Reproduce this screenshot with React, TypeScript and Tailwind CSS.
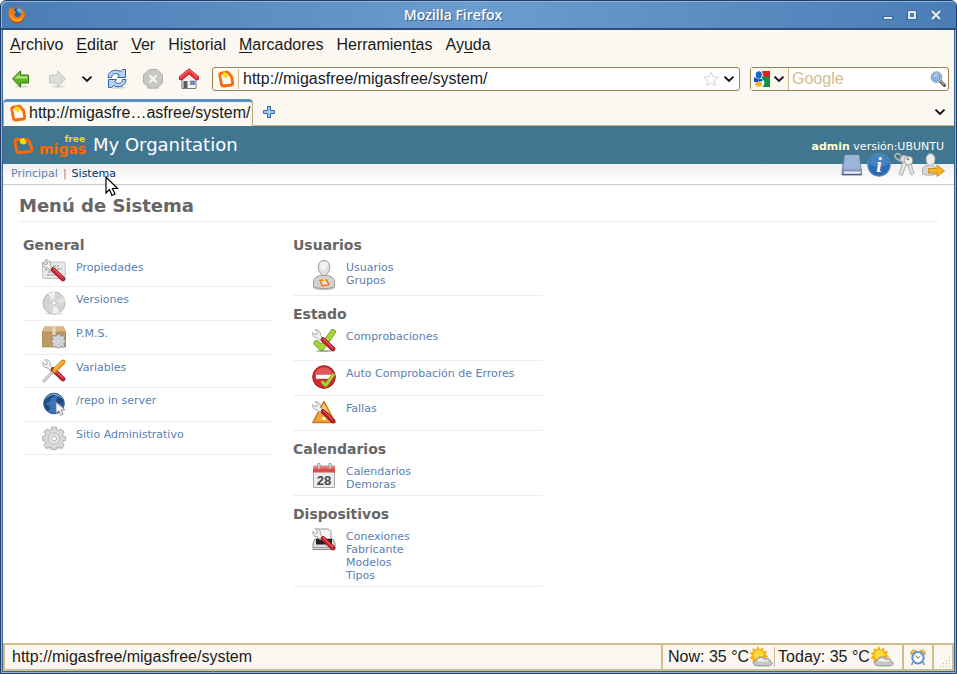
import React from "react";

type IconProps = { className?: string };

const Wrench = ({ handle = "#cf2330" }: { handle?: string }) => (
  <g>
    <path d="M3 .8 5.600 3.400 5 5.200 3.200 5.600.8 3.400C.2 6.400 2 8.800 5 8.600L8.500 12 11 9.500 8.200 6.200C9 3.200 7 .4 3 .8Z" fill="#f4f4f2" stroke="#92928e" strokeWidth=".8" />
    <path d="M11 10.500 21 20" stroke="#8f1720" strokeWidth="4.600" strokeLinecap="round" />
    <path d="M11 10.500 21 20" stroke={handle} strokeWidth="3.200" strokeLinecap="round" />
    <path d="M11.500 9.800 20.600 18.600" stroke="#f08a86" strokeWidth=".9" strokeLinecap="round" />
  </g>
);

const Gear = ({ fill = "#d9d9d9", stroke = "#a6a6a6" }: { fill?: string; stroke?: string }) => (
  <g stroke={stroke} strokeWidth=".9" fill={fill} strokeLinejoin="round">
    <path d="M9.800 1.200h4.400l.7 2.800 1.600.7 2.600-1.600 3 3-1.600 2.600.6 1.600 2.600.5v3.400l-2.600.8-.7 1.600 1.700 2.800-3 2.900-2.600-1.600-1.800.7-.6 2h-4.200l-.7-2-1.700-.7-2.600 1.600-3-3 1.600-2.700-.7-1.600-2.400-.7v-3.600l2.500-.6.6-1.600-1.600-2.600 3-3 2.600 1.600 1.700-.7Z" />
    <circle cx="12" cy="12.500" r="5.600" fill="#e9e9e9" stroke="#b4b4b4" />
    <circle cx="12" cy="12.500" r="2.600" fill="#fff" />
  </g>
);

const Logo = ({ className }: IconProps) => (
  <svg viewBox="0 0 18 18" className={className} aria-hidden="true">
    <path d="M2.800 5.200Q2.600 3.400 4.400 3.100L9.500 2.200Q11 2 11.600 3.200L14.500 6.500 15.700 13Q15.900 14.800 14 15L6.600 16Q4.800 16.200 4.500 14.500Z" fill="#fff" stroke="#ff6a00" strokeWidth="2.800" strokeLinejoin="round" />
    <path d="m6 3 1.400-1.400 1.200 1.800L10.800 3l-.5 2 2 1.300-2.400.7L9.400 9 7.800 7.200 6 7.700l.4-2.100Z" fill="#ffd71a" />
  </svg>
);

const FirefoxIcon = () => (
  <svg viewBox="0 0 18 18" className="size-[18px]" aria-hidden="true">
    <circle cx="9" cy="9" r="8" fill="#dc6410" />
    <circle cx="9.600" cy="7.200" r="5.400" fill="#245ea8" />
    <path d="M8.500 3c3-2 6 .4 5.600 4l-2.600.5L9.500 5Z" fill="#5ab7ea" />
    <path d="M1.400 1.400C3 3 4 3 6.600 2.600 5 4 5 5 7.700 5.800 9 6.400 7 7.400 6.400 8c-.3 3 4 4.400 6 1.600C14 7.600 13.800 4.700 12.400 2.400 16 4 17.400 8 16.200 11.400c-1.500 4.300-6.500 6.400-10.700 4.400C.9 13.600 0 9 .8 5.200Z" fill="#ee7a12" />
    <path d="M2.500 6C2.500 10 5 13.500 9 13.500c3 0 5.500-2 6.500-4.500-.3 4-3 6-6.500 6-4.500 0-7-4-6.500-9Z" fill="#fbb13a" />
    <path d="M1.400 12c1.400 3.800 6 5.600 10 4.600 3-1 4.500-3.200 5-6" fill="none" stroke="#a33b0a" strokeWidth=".8" />
  </svg>
);

const Arrow = ({ dir }: { dir: "back" | "next" }) => (
  <svg viewBox="0 0 20 20" className="size-5" aria-hidden="true">
    <ellipse cx="11" cy="17.500" rx="7" ry="1.400" fill="#000" opacity=".1" />
    {dir === "back" ? (
      <>
        <path d="M1.500 9.800 9.500 1.800V6h8v8h-8v4.200Z" fill="#5fb225" stroke="#2f7d0b" strokeLinejoin="round" />
        <path d="M3.200 9.800 8.500 4.400V7h8v2.800Z" fill="#a9dc6d" />
      </>
    ) : (
      <path d="M18.500 9.800 10.500 1.800V6h-8v8h8v4.200Z" fill="#dcdfd7" stroke="#c3c7bf" strokeLinejoin="round" />
    )}
  </svg>
);

const Chevron = () => (
  <svg viewBox="0 0 12 8" className="h-2 w-3" aria-hidden="true">
    <path d="M1.500 1.600 6 6l4.500-4.400" fill="none" stroke="#111" strokeWidth="1.900" />
  </svg>
);

const Reload = () => (
  <svg viewBox="0 0 22 22" className="size-[22px]" aria-hidden="true">
    <ellipse cx="11" cy="19.500" rx="8" ry="1.500" fill="#000" opacity=".12" />
    <g fill="#b7d3f0" stroke="#2e65ad" strokeLinejoin="round">
      <path d="M2 9.500C2.200 3 9 .5 14.500 3.500L16.500 1.500H19.500V9.500H11.500L13.400 7C10 4.500 6 5.500 5.500 9.500Z" />
      <path d="M20 11.500C19.800 18 13 20.500 7.500 17.500L5.500 19.500H2.500V11.500H10.500L8.600 14C12 16.500 16 15.500 16.500 11.500Z" />
    </g>
  </svg>
);

const Stop = () => (
  <svg viewBox="0 0 22 22" className="size-[22px]" aria-hidden="true">
    <ellipse cx="11" cy="20" rx="7" ry="1.300" fill="#000" opacity=".1" />
    <path d="M7 1.500h8L20.500 7v8L15 20H7L1.500 15V7Z" fill="#c9c7c3" stroke="#b0aeaa" />
    <path d="M7.500 7.500l7 7m0-7-7 7" stroke="#f7f5f1" strokeWidth="2.200" />
  </svg>
);

const Home = () => (
  <svg viewBox="0 0 22 22" className="size-[22px]" aria-hidden="true">
    <path d="M4 10 11 4l7 6v10.500H4Z" fill="#f3f3f0" stroke="#777" />
    <path d="M5.500 13h4v7h-4z" fill="#5c5c5c" />
    <path d="M12.500 13h4v3.500h-4z" fill="#6c94c4" stroke="#4a6488" strokeWidth=".6" />
    <path d="M1.500 11.500v-3L11 .8l9.500 7.700v3L18 12l-7-6-7 6Z" fill="#ee3339" stroke="#a50d13" strokeWidth=".8" />
    <path d="M2.500 8.900 11 2l8.500 6.900" fill="none" stroke="#ff8f8f" strokeWidth=".8" />
  </svg>
);

const Star = () => (
  <svg viewBox="0 0 16 16" className="size-4" aria-hidden="true">
    <path d="m8 1 2 4.700 5.200.5-4 3.400 1.300 5L8 12l-4.500 2.600 1.300-5-4-3.400L6 5.700Z" fill="#fff" stroke="#d4d4d4" />
  </svg>
);

const GoogleIcon = () => (
  <svg viewBox="0 0 16 16" className="size-4" aria-hidden="true">
    <path d="M0 0h16v16H0z" fill="#fff" />
    <path d="M8 0h8v6H9.500Z" fill="#ee1c1c" />
    <path d="M8 5.500 16 6v10H8.500C12 12 10 9 8 8Z" fill="#0c9246" />
    <path d="M0 6 4 8v3H0Z" fill="#1952bd" />
    <ellipse cx="4.800" cy="4" rx="3.100" ry="3.800" fill="#1763c7" />
    <path d="M3 8.200 8 8l.5 2L5 10.800Z" fill="#0d55b6" />
    <ellipse cx="4.600" cy="13.200" rx="3.600" ry="2.400" fill="#f5b31b" />
  </svg>
);

const Magnifier = () => (
  <svg viewBox="0 0 16 16" className="size-4" aria-hidden="true">
    <path d="m10 10 4.500 4.300" stroke="#555" strokeWidth="3.200" strokeLinecap="round" />
    <path d="m10.500 10 3.600 3.500" stroke="#aaa" strokeWidth="1.200" strokeLinecap="round" />
    <circle cx="6.500" cy="6.200" r="5.400" fill="#d9e6f3" stroke="#8390a0" />
    <circle cx="6.500" cy="6.200" r="3.800" fill="#8db9e8" stroke="#4e7fbb" strokeWidth=".8" />
    <path d="M4 5.500c.4-1.500 2-2.200 3.600-1.900" stroke="#fff" fill="none" />
  </svg>
);

const Plus = () => (
  <svg viewBox="0 0 12 12" className="size-3" aria-hidden="true">
    <path d="M4.500.5h3v4h4v3h-4v4h-3v-4h-4v-3h4Z" fill="#a5c7ec" stroke="#2f62a6" />
  </svg>
);

const Svg = ({ children, className = "size-6" }: { children: React.ReactNode; className?: string }) => (
  <svg viewBox="0 0 24 24" className={className} aria-hidden="true">{children}</svg>
);

const PropertiesIcon = () => (
  <Svg>
    <rect x=".6" y="3" width="22.600" height="16.500" rx="1.500" fill="#e8e8e6" stroke="#c2c2bf" />
    <path d="M11 7h6m-6 3h9M6 13h7M5 16h9M3 10.500h2" stroke="#8a8a8a" strokeWidth="1" strokeDasharray="3 1" />
    <Wrench />
  </Svg>
);
const DiscIcon = () => (
  <Svg>
    <ellipse cx="12" cy="22.500" rx="9" ry="1.200" fill="#999" opacity=".4" />
    <circle cx="12" cy="12" r="11" fill="#d4d4d2" stroke="#a9a9a7" strokeWidth=".8" />
    <path d="M12 12 6 2.500a11 11 0 0 1 7-1.500ZM12 12 18 21.500a11 11 0 0 1-8 1Z" fill="#f0f0ef" />
    <path d="m12 12 9-6.500a11 11 0 0 1 2 6Z" fill="#e4e4e4" />
    <circle cx="12" cy="12" r="4" fill="#dededc" />
    <circle cx="12" cy="12" r="2.300" fill="#fff" stroke="#a9a9a9" strokeWidth=".8" />
  </Svg>
);
const PackageIcon = () => (
  <Svg>
    <path d="M2.500 1.500h19L24 7v15H0V7Z" fill="#c59f6d" />
    <path d="M2.500 1.500h19L24 7H0Z" fill="#d8b98b" />
    <path d="M0 7h24v15H0Z" fill="#bf9866" stroke="#a37f4d" strokeWidth=".6" />
    <path d="M10.500 1.500h3V10h-3Z" fill="#ead9b6" />
    <g transform="translate(9 8.500) scale(.62)"><Gear fill="#d5d7da" stroke="#777" /></g>
  </Svg>
);
const ToolsIcon = () => (
  <Svg>
    <path d="m2 22 9-9.500" stroke="#8f8f8b" strokeWidth="2.600" strokeLinecap="round" />
    <path d="m2 22 9-9.500" stroke="#eee" strokeWidth="1.200" strokeLinecap="round" />
    <Wrench />
    <path d="m12.500 11.500 8.500-8.500" stroke="#bd6b0b" strokeWidth="4.600" strokeLinecap="round" />
    <path d="m12.500 11.500 8.500-8.500" stroke="#f6a428" strokeWidth="3.400" strokeLinecap="round" />
    <path d="m12.500 10 7.500-7.500" stroke="#fcd37c" strokeWidth="1" />
  </Svg>
);
const Pointer = () => <path d="M0 0v13.500l3.300-3 2.300 5.200 2.600-1.200-2.300-5 4.600-.3Z" fill="#f5f5f5" stroke="#777" strokeWidth=".9" />;
const GlobeIcon = () => (
  <Svg>
    <circle cx="12" cy="11.500" r="10.300" fill="#3d73b5" stroke="#2b5288" />
    <path d="M4 6.500C7 2 12 1.800 14 3L11 5.500 9 6l-1 3-3 1.500-1 2 3 1 1 3-1.500 2.500C1.500 17 1.500 10 4 6.500ZM15.500 5l4.500 1c1.500 3 1.800 6 1 8l-3-2.500-3-.5-1-3Z" fill="#1f4880" />
    <path d="M4 6.500C8 1 16 1.500 20 6" stroke="#8ab6e6" fill="none" />
    <g transform="translate(14 10) scale(.85)"><Pointer /></g>
  </Svg>
);
const GearIcon = () => <Svg><ellipse cx="12" cy="22" rx="10" ry="1.600" fill="#ccc" opacity=".6" /><Gear /></Svg>;
const UserIcon = () => (
  <svg viewBox="0 0 24 32" className="h-8 w-6" aria-hidden="true">
    <ellipse cx="12" cy="29" rx="10.500" ry="2" fill="#777" opacity=".45" />
    <path d="M1.500 28V23c0-4 4-6 7-6.500h7c3 .5 7 2.500 7 6.500v5c-6 2-15 2-21 0Z" fill="#d4d4d4" stroke="#999" />
    <path d="M12 1.500c4 0 6 3 5.600 7-.4 4-2.300 8-5.600 8s-5.200-4-5.600-8c-.4-4 1.600-7 5.600-7Z" fill="#e0e0e0" stroke="#9c9c9c" />
    <path d="M8 4.500c2-2 6-2 8 0-1 4-3 6-7 7Z" fill="#f3f3f3" />
    <path d="m8 21.500 6-1 3 5-6.500 1.500Z" fill="#e4e4e4" stroke="#f57a12" strokeWidth="1.700" strokeLinejoin="round" />
    <path d="M11 20h3v2h-3z" fill="#ffd020" />
  </svg>
);
const Check = () => (
  <g>
    <path d="m3 14 5 5L19.500 3" fill="none" stroke="#6b9914" strokeWidth="5.600" strokeLinejoin="round" strokeLinecap="round" />
    <path d="m3 14 5 5L19.500 3" fill="none" stroke="#a8d439" strokeWidth="4.200" strokeLinejoin="round" strokeLinecap="round" />
  </g>
);
const CheckIcon = () => (
  <Svg>
    <ellipse cx="12" cy="23" rx="8" ry="1" fill="#aaa" />
    <g transform="translate(1.500 1)"><Check /></g>
    <g transform="translate(0 1)"><Wrench /></g>
  </Svg>
);
const NoEntryIcon = () => (
  <Svg>
    <circle cx="12" cy="12" r="11.300" fill="#d22b2e" stroke="#9e171b" />
    <path d="M2.500 10a9.700 9.700 0 0 1 19 0Z" fill="#e0595a" />
    <rect x="4" y="9.800" width="16" height="4" fill="#fff" />
    <g transform="translate(8.500 8) scale(.65)"><Check /></g>
  </Svg>
);
const WarningIcon = () => (
  <Svg>
    <path d="M12 1.500 23.200 22.500H.8Z" fill="#f2a334" stroke="#c9781c" strokeWidth="1.400" strokeLinejoin="round" />
    <path d="m12 4 4.500 8H7Z" fill="#f9ca78" />
    <circle cx="12" cy="18.500" r="1.700" fill="#fff" />
    <g transform="translate(0 1)"><Wrench handle="#bd1c2a" /></g>
  </Svg>
);
const CalendarIcon = () => (
  <svg viewBox="0 0 24 26" className="h-[26px] w-6" aria-hidden="true">
    <path d="M1.500 3h21v21.500h-21z" fill="#ececec" stroke="#aaa" />
    <path d="M1 3h22v6.500H1z" fill="#e14b46" />
    <path d="M1 3h22v2.500H1z" fill="#ee7b74" />
    <path d="M7 1v4.500M18 1v4.500" stroke="#8e8e8e" strokeWidth="2.800" strokeLinecap="round" />
    <path d="M7 1v4M18 1v4" stroke="#eee" strokeWidth="1.200" strokeLinecap="round" />
    <text x="12" y="21.500" textAnchor="middle" fontSize="13" fontWeight="700" fontFamily="'Liberation Sans', sans-serif" fill="#444">28</text>
  </svg>
);
const PrinterIcon = () => (
  <Svg>
    <path d="M5.500 1h11l2.500 2.500V12h-13.500Z" fill="#f3f3f3" stroke="#999" />
    <path d="M3 11h18l2 4.500v6H1v-6Z" fill="#ddd" stroke="#888" />
    <path d="M4 11h16v5.500H4z" fill="#222" />
    <path d="M2 19.500h20" stroke="#999" />
    <Wrench />
  </Svg>
);

const WeatherIcon = () => (
  <svg viewBox="0 0 24 22" className="h-[22px] w-6 shrink-0" aria-hidden="true">
    <path d="m9 0 1.700 3.500L14 1.500l.4 3.800 3.800-.3-1.700 3.500 3 2-3.500 1.500L9 17l-3-.5-2.500.5.3-3.500L.5 12.200 3 9.500.5 7l3.400-1L3.500 2.300 7 3.500Z" fill="#f5ae14" />
    <circle cx="9.500" cy="9" r="5" fill="#ffd83a" />
    <path d="M7 19.500c-4-.5-3-5 .5-5 .5-4 7-5 8.500-1.500 3-1.500 5 0 5 2 4 1.500 2 5-1.500 5H9Z" fill="#c6c6c6" stroke="#858585" strokeWidth=".8" />
    <path d="M8 15.500c1-3.500 6-4 7-1 2-1 4-.5 4.500 1Z" fill="#efefef" />
  </svg>
);
const ClockIcon = () => (
  <svg viewBox="0 0 16 17" className="h-[17px] w-4" aria-hidden="true">
    <path d="m3 13-1.500 3M13 13l1.500 3" stroke="#888" strokeWidth="1.500" />
    <path d="M.8 5.500C0 1.500 4 0 6.500 2ZM15.200 5.500C16 1.500 12 0 9.500 2Z" fill="#f7c55b" stroke="#cc8b1e" strokeWidth=".8" />
    <circle cx="8" cy="8.800" r="5.700" fill="#fff" stroke="#5a93d6" strokeWidth="2" />
    <path d="m5.500 6.500 2.700 2.800L10.500 7" fill="none" stroke="#555" />
  </svg>
);

const BookIcon = () => (
  <Svg>
    <path d="M4.500 2h14.500l2.500 16v4h-19.500v-4Z" fill="#7f93bd" stroke="#6c7ba5" strokeWidth=".8" />
    <path d="M5 2h14l1.500 14.500H3.500Z" fill="#9ab5d8" />
    <path d="M4 18.500h16.500v2.300H4z" fill="#f1f2f6" />
    <path d="M2 21.500h19.500" stroke="#4f5b85" strokeWidth="1.200" />
  </Svg>
);
const InfoIcon = () => (
  <Svg>
    <circle cx="12" cy="12" r="11.300" fill="#2b6cb0" stroke="#6294c4" />
    <path d="M2 11a10 10 0 0 1 20 0c-5 3-14 4-20 0Z" fill="#4681bf" />
    <text x="12" y="19" textAnchor="middle" fontSize="20" fontStyle="italic" fontWeight="700" fontFamily="'Liberation Serif', serif" fill="#fff">i</text>
  </Svg>
);
const KeysIcon = () => (
  <Svg>
    <path d="M7 2C4 0 1 .5 1 3s4 4.500 7 5" fill="none" stroke="#bbb" strokeWidth="1.500" />
    <path d="m9 8-4 13 3 1.500L13 10ZM13 10l4 12 3-2-4-12Z" fill="#e3e3df" stroke="#aaa" strokeWidth=".9" />
    <circle cx="10" cy="6" r="3.800" fill="#d7d7d3" stroke="#a4a4a4" />
    <circle cx="14.500" cy="7.500" r="4.100" fill="#efefec" stroke="#a4a4a4" />
    <circle cx="14" cy="6" r="1.300" fill="#888" />
  </Svg>
);
const LogoutIcon = () => (
  <Svg>
    <path d="M1.500 21v-4c0-3 4-5 7-5s7 2 7 5v4c-4 1.500-10 1.500-14 0Z" fill="#d9d9d9" stroke="#aaa" />
    <path d="M9.500.8c6 0 5.500 11.500 0 11.500S3.500.8 9.500.8Z" fill="#ececec" stroke="#bbb" />
    <path d="M7.500 15.500H16v-3.500l7.500 6-7.500 5.500V20H7.500Z" fill="#f7b21d" stroke="#c3810c" strokeWidth=".8" />
  </Svg>
);

type Row = { icon: React.ReactNode; links: string[]; height: string };
type Section = { title: string; rows: Row[] };

const left: Section[] = [
  {
    title: "General",
    rows: [
      { icon: <PropertiesIcon />, links: ["Propiedades"], height: "h-8" },
      { icon: <DiscIcon />, links: ["Versiones"], height: "h-[34px]" },
      { icon: <PackageIcon />, links: ["P.M.S."], height: "h-[34px]" },
      { icon: <ToolsIcon />, links: ["Variables"], height: "h-[33px]" },
      { icon: <GlobeIcon />, links: ["/repo in server"], height: "h-[34px]" },
      { icon: <GearIcon />, links: ["Sitio Administrativo"], height: "h-[33px]" },
    ],
  },
];

const right: Section[] = [
  { title: "Usuarios", rows: [{ icon: <UserIcon />, links: ["Usuarios", "Grupos"], height: "h-[41px]" }] },
  {
    title: "Estado",
    rows: [
      { icon: <CheckIcon />, links: ["Comprobaciones"], height: "h-[37px]" },
      { icon: <NoEntryIcon />, links: ["Auto Comprobación de Errores"], height: "h-[35px]" },
      { icon: <WarningIcon />, links: ["Fallas"], height: "h-[35px]" },
    ],
  },
  { title: "Calendarios", rows: [{ icon: <CalendarIcon />, links: ["Calendarios", "Demoras"], height: "h-[37px]" }] },
  { title: "Dispositivos", rows: [{ icon: <PrinterIcon />, links: ["Conexiones", "Fabricante", "Modelos", "Tipos"], height: "h-[63px]" }] },
];

function Column({ sections }: { sections: Section[] }) {
  return (
    <div className="w-[250px]">
      {sections.map((section) => (
        <section key={section.title}>
          <h2 className="h-7 pt-2 text-[14px] leading-5 font-bold text-[#666]">{section.title}</h2>
          <ul>
            {section.rows.map((row) => (
              <li key={row.links[0]} className={`flex items-start gap-2.5 border-b border-[#eee] pl-[19px] ${row.height}`}>
                <span className="mt-1 w-6 shrink-0">{row.icon}</span>
                <span className="flex flex-col pt-1.5">
                  {row.links.map((link) => (
                    <a key={link} href="#" className="text-[11px] leading-[13px] text-[#5b80b2]">{link}</a>
                  ))}
                </span>
              </li>
            ))}
          </ul>
        </section>
      ))}
    </div>
  );
}

const menus: [string, string, string][] = [
  ["", "A", "rchivo"],
  ["", "E", "ditar"],
  ["", "V", "er"],
  ["Hi", "s", "torial"],
  ["", "M", "arcadores"],
  ["Herramien", "t", "as"],
  ["Ay", "u", "da"],
];

const cell = "flex items-center border-2 border-[#d2bc8c]";

export default function App() {
  return (
    <div className="flex min-h-screen flex-col rounded-t-md border border-[#1f3f68] bg-[#8fb4dc] px-px pb-px font-['Liberation_Sans',sans-serif] text-[16px] text-[#1a1a1a]">
      <header className="-mx-px flex h-[29px] items-center rounded-t-[5px] border-b-2 border-[#2f4f78] bg-linear-to-r from-[#4a7db5] via-[#6c9dd0] to-[#4a7db5] pr-1 pl-[7px] shadow-[inset_1px_1px_0_#8fb4dc]">
        <FirefoxIcon />
        <h1 className="flex-1 text-center font-['Open_Sans',sans-serif] text-[14px] font-semibold text-white [text-shadow:1px_1px_0_#3c618c]">Mozilla Firefox</h1>
        <div className="flex w-[72px] items-center gap-3">
          <button aria-label="Minimizar" className="flex size-4 items-end p-[3px]"><span className="h-1 w-full border border-[#3c6798] bg-[#dfeaf6]" /></button>
          <button aria-label="Maximizar" className="size-2 border-2 border-[#dfeaf6] outline outline-[#3c6798]" />
          <button aria-label="Cerrar" className="ml-0.5">
            <svg viewBox="0 0 12 12" className="size-3" aria-hidden="true"><path d="m2 2 8 8m0-8-8 8" stroke="#3c6798" strokeWidth="4" /><path d="m2 2 8 8m0-8-8 8" stroke="#e6eff8" strokeWidth="2.200" /></svg>
          </button>
        </div>
      </header>

      <div className="flex flex-1 flex-col border-x border-b border-[#3a6796] bg-[#fbf8f1]">
        <nav className="flex h-[30px] items-center gap-[13px] pl-[7px]">
          {menus.map(([before, key, after]) => (
            <button key={before + key + after} className="leading-5">{before}<span className="underline underline-offset-2">{key}</span>{after}</button>
          ))}
        </nav>

        <div className="flex h-[38px] items-center pr-[5px] pl-2">
          <button aria-label="Atrás"><Arrow dir="back" /></button>
          <button aria-label="Adelante" className="ml-4"><Arrow dir="next" /></button>
          <button aria-label="Historial reciente" className="ml-3.5"><Chevron /></button>
          <button aria-label="Recargar" className="ml-[13px]"><Reload /></button>
          <button aria-label="Detener" className="ml-3.5"><Stop /></button>
          <button aria-label="Inicio" className="ml-3.5"><Home /></button>
          <div className="ml-3 flex h-6 flex-1 items-center rounded-[3px] border border-[#9a834e] bg-white pr-1">
            <span className="flex h-5 w-[26px] items-center justify-center border-r border-[#d2bc8c] bg-[#fbf8f1]"><Logo className="size-[18px]" /></span>
            <input aria-label="Dirección" defaultValue="http://migasfree/migasfree/system/" className="min-w-0 flex-1 pl-1 outline-none" />
            <button aria-label="Añadir a marcadores"><Star /></button>
            <button aria-label="Mostrar historial" className="ml-1"><Chevron /></button>
          </div>
          <div className="ml-2.5 flex h-6 w-[199px] items-center rounded-[3px] border border-[#9a834e] bg-white pr-0.5">
            <button aria-label="Buscador" className="flex h-[22px] w-[38px] items-center gap-[3px] border-r border-[#d2bc8c] bg-[#fbf8f1] pl-[3px]"><GoogleIcon /><Chevron /></button>
            <input aria-label="Buscar" placeholder="Google" className="min-w-0 flex-1 pl-[3px] outline-none placeholder:text-[#d2bc8c]" />
            <button aria-label="Buscar ahora"><Magnifier /></button>
          </div>
        </div>

        <div className="flex h-7 items-center border-b border-[#cdb583] pr-2">
          <button className="-mb-px flex h-[27px] w-[250px] items-center gap-0.5 rounded-t-[4px] border border-t-[3px] border-[#b9a67a] border-b-transparent border-t-[#5d91c8] bg-[#fbf8f1] pl-[5px] whitespace-nowrap"><Logo className="size-[18px] shrink-0" />http://migasfre…asfree/system/</button>
          <button aria-label="Nueva pestaña" className="ml-2.5"><Plus /></button>
          <button aria-label="Lista de pestañas" className="ml-auto"><Chevron /></button>
        </div>

        <div className="flex-1 bg-white font-['DejaVu_Sans',sans-serif]">
          <div className="relative">
            <div className="flex h-[38px] items-center bg-[#417690] px-2">
              <svg viewBox="0 0 24 20" className="h-5 w-6" aria-hidden="true">
                <path d="M4 6.500Q4 4.500 6 4.500L16 4.500 18.500 7 21 14Q21.500 16 19 16.500L8 17.500Q6 17.500 5.500 15.500Z" fill="none" stroke="#ff6a00" strokeWidth="3" strokeLinejoin="round" />
                <path d="m9 4 4-1 .5 2 2 1-.5 3-3 .5L9 8Z" fill="#f5db0a" />
              </svg>
              <div className="ml-1 flex w-[50px] flex-col font-bold">
                <span className="mr-1 self-end text-[9px] leading-2 text-[#e8e010]">free</span>
                <span className="text-[14px] leading-3 text-[#ff6a00]">migas</span>
              </div>
              <span className="ml-1 text-[18px] leading-6 text-white">My Organitation</span>
              <p className="mr-0.5 ml-auto self-end pb-[11px] text-[11px] leading-[13px] text-white"><b className="text-[#ffffcc]">admin</b> versión:UBUNTU</p>
            </div>
            <nav className="flex h-[21px] items-center gap-[5px] border-b border-[#ccc] bg-linear-to-b from-[#f0f0f0] to-white pl-2 text-[11px] text-[#888]">
              <a href="#" className="text-[#5b80b2]">Principal</a>|
              <a href="#" className="text-[#003366]">Sistema</a>
            </nav>
            <div className="absolute top-[27px] right-[9px] flex gap-[3px]">
              <button aria-label="Documentación"><BookIcon /></button>
              <button aria-label="Información"><InfoIcon /></button>
              <button aria-label="Cambiar contraseña"><KeysIcon /></button>
              <button aria-label="Salir"><LogoutIcon /></button>
            </div>
            <svg viewBox="0 0 14 21" className="pointer-events-none absolute top-[50px] left-[102px] h-[21px] w-3.5" aria-hidden="true">
              <path d="M1 1v16l3.500-3.500 2.500 6 3-1.500-2.500-5.500h5Z" fill="#fff" stroke="#000" strokeWidth="1.200" />
            </svg>
          </div>
          <main className="pr-[15px] pl-4">
            <h1 className="h-[37px] border-b border-[#eee] pt-[9px] text-[18px] leading-6 font-bold text-[#666]">Menú de Sistema</h1>
            <div className="flex gap-5 pt-[5px] pl-1">
              <Column sections={left} />
              <Column sections={right} />
            </div>
          </main>
        </div>

        <footer className="flex h-7 items-stretch leading-5">
          <div className={`${cell} min-w-0 flex-1 pl-[7px]`}>http://migasfree/migasfree/system</div>
          <div className={`${cell} -ml-0.5 w-[243px] pl-[5px]`}>
            <span>Now: 35 °C</span><WeatherIcon />
            <span className="ml-px border-l border-[#d2bc8c] pl-[3px]">Today: 35 °C</span><WeatherIcon />
          </div>
          <div className={`${cell} -ml-0.5 w-8 justify-center`}><ClockIcon /></div>
          <div className={`${cell} -ml-0.5 w-[22px] items-end justify-end`}>
            <svg viewBox="0 0 13 13" className="size-[13px]" fill="#cdb583" aria-hidden="true">
              <path d="M10 1h1v1h-1zM7 4h1v1H7zM10 4h1v1h-1zM4 7h1v1H4zM7 7h1v1H7zM10 7h1v1h-1zM1 10h1v1H1zM4 10h1v1H4zM7 10h1v1H7zM10 10h1v1h-1z" />
            </svg>
          </div>
        </footer>
      </div>
    </div>
  );
}
